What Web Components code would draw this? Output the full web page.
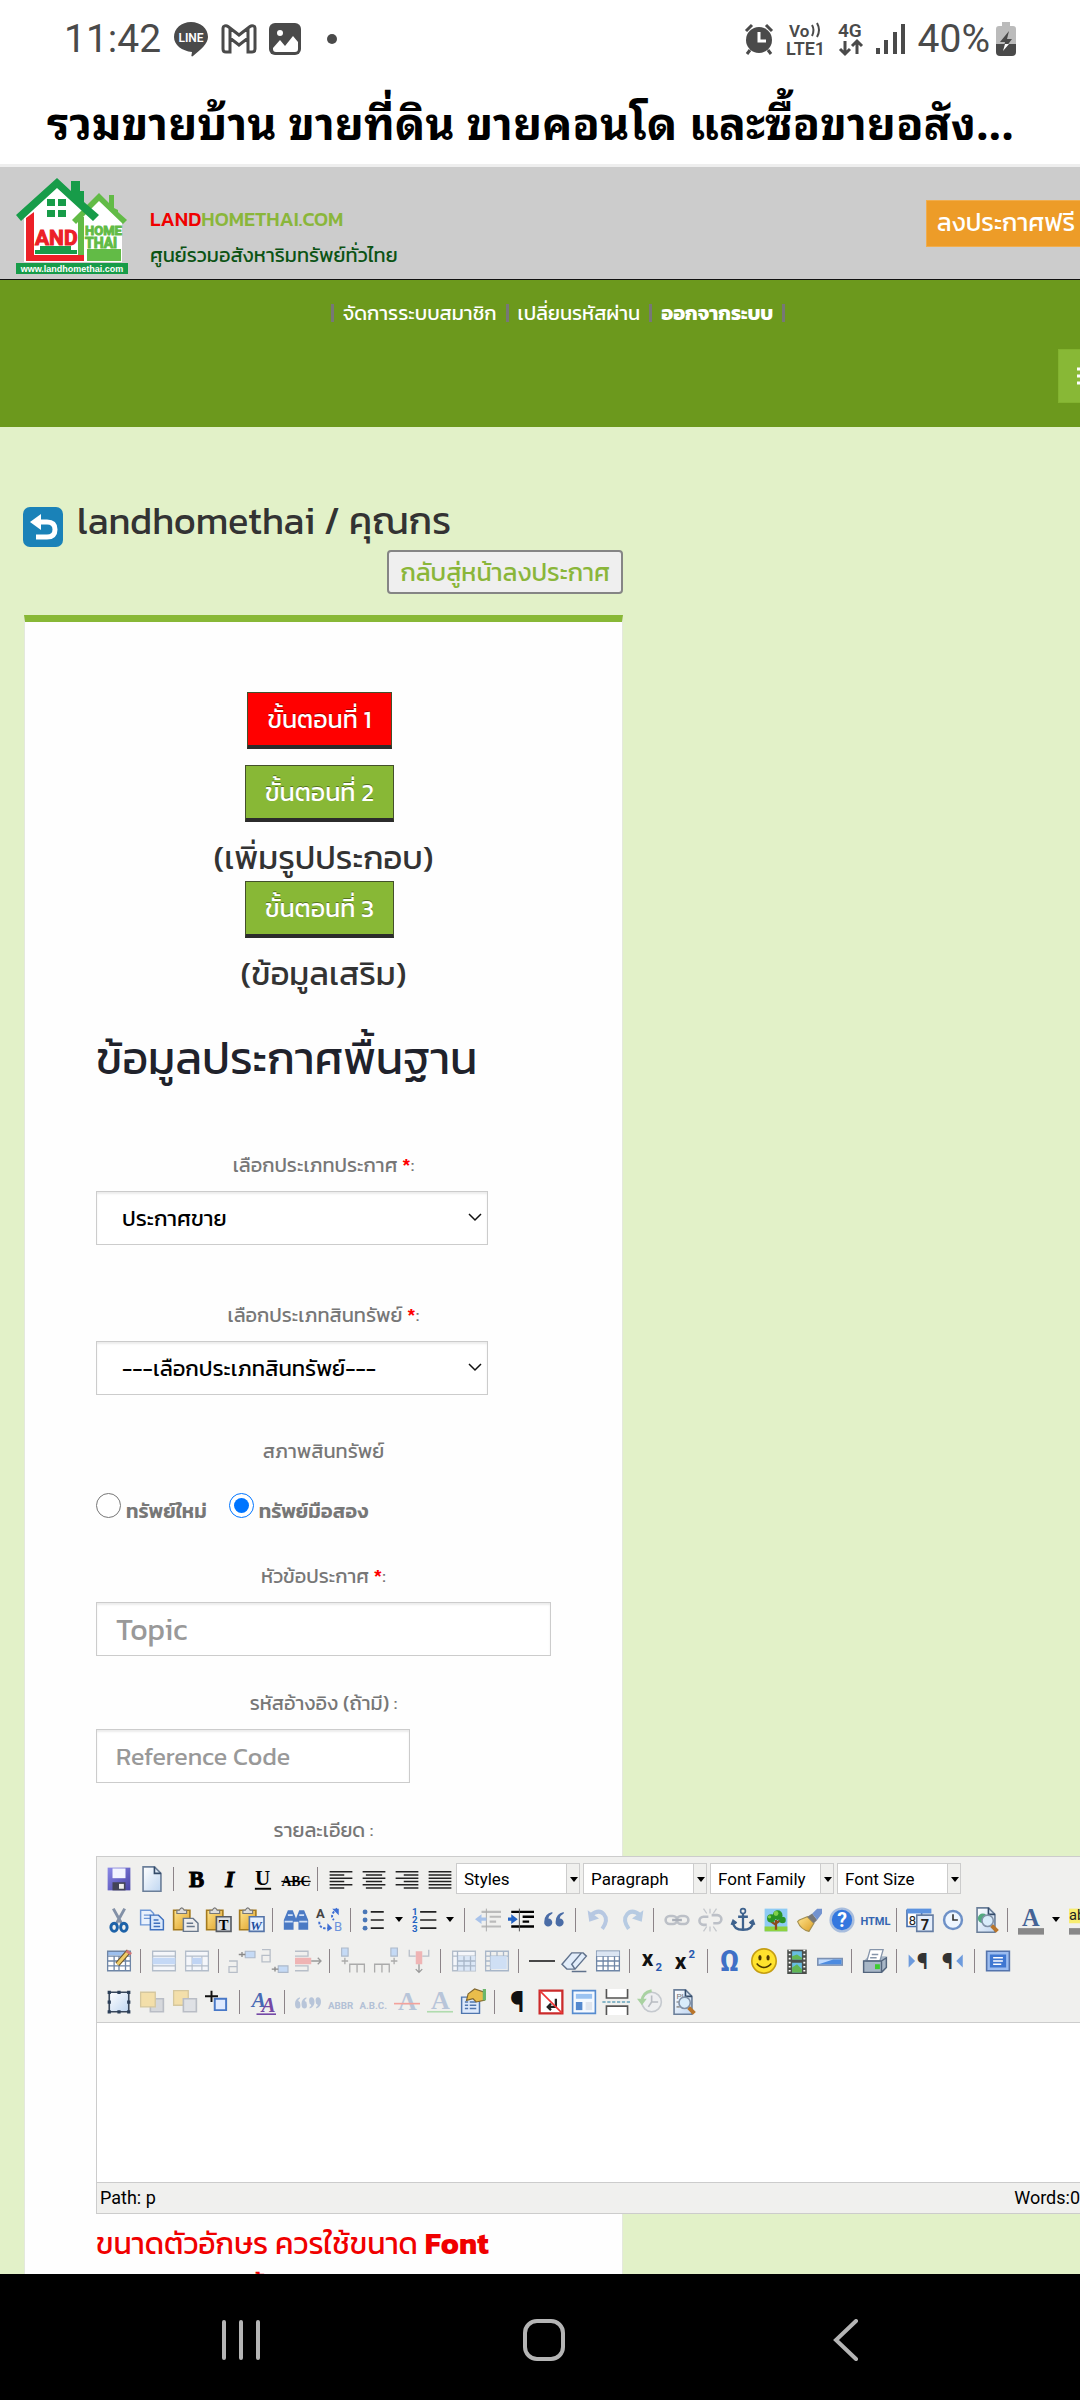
<!DOCTYPE html>
<html lang="th">
<head>
<meta charset="utf-8">
<meta name="viewport" content="width=device-width, initial-scale=1">
<title>รวมขายบ้าน ขายที่ดิน ขายคอนโด และซื้อขายอสังหาริมทรัพย์</title>
<style>
    html, body {
        margin: 0;
        height: 100%;
    }

    body {
        display: flex;
        flex-direction: column;
        overflow: hidden;
        background: #fff;
        color: #333;
        font-family: Kanit, "Noto Sans Thai", "Noto Sans", "Open Sans", sans-serif;
        font-size: 20px;
    }

    main {
        flex: 1;
        min-height: 0;
        overflow: hidden;
        background: #e2f1c8;
    }

    .wide {
        margin-bottom: 56px;
    }

    .type {
        margin-bottom: 42px;
    }
</style>
</head>
<body>
<status-bar></status-bar>
<page-title>รวมขายบ้าน ขายที่ดิน ขายคอนโด และซื้อขายอสัง...</page-title>
<main>
    <site-header></site-header>
    <member-nav></member-nav>
    <member-heading>landhomethai / คุณกร</member-heading>
    <post-card>
        <post-step label="ขั้นตอนที่ 1" active></post-step>
        <post-step label="ขั้นตอนที่ 2">(เพิ่มรูปประกอบ)</post-step>
        <post-step label="ขั้นตอนที่ 3">(ข้อมูลเสริม)</post-step>
        <section-title>ข้อมูลประกาศพื้นฐาน</section-title>
        <select-field class="wide" label="เลือกประเภทประกาศ" required option="ประกาศขาย"></select-field>
        <select-field class="type" label="เลือกประเภทสินทรัพย์" required option="---เลือกประเภทสินทรัพย์---"></select-field>
        <condition-field></condition-field>
        <text-field label="หัวข้อประกาศ" required placeholder="Topic" size="large"></text-field>
        <text-field label="รหัสอ้างอิง (ถ้ามี) " placeholder="Reference Code"></text-field>
        <detail-editor></detail-editor>
        <size-note>ขนาดตัวอักษร ควรใช้ขนาด <b>Font</b><br>ขนาด 16 เท่านั้น</size-note>
    </post-card>
</main>
<system-nav></system-nav>

<script>
class BaseElement extends HTMLElement {

    constructor() {
        super();
        this.shadowDOM = this.attachShadow({mode: "open"});
    }

    connectedCallback() {
        this.render();
    }
}

class StatusBar extends BaseElement {
    render() {
        this.shadowDOM.innerHTML = `
            <style>
                :host {
                    display: flex;
                    align-items: center;
                    justify-content: space-between;
                    height: 78px;
                    padding: 0 64px 0 64px;
                    color: #4a4a4a;
                    font-family: Roboto, sans-serif;
                    font-size: 39px;
                }

                div {
                    display: flex;
                    align-items: center;
                }

                .left {
                    gap: 12px;
                }

                .right {
                    gap: 12px;
                }

                .right span {
                    margin-right: -6px;
                }

                svg {
                    display: block;
                    overflow: visible;
                }

                text {
                    font-weight: 600;
                }
            </style>
            <div class="left">
                <span>11:42</span>
                <svg width="36" height="36" viewBox="0 0 36 36"><path d="M18 1c9.500 0 17 6.500 17 15 0 7-8 13-15 19-1 1-2 0-1.500-1l.5-3C9 30 1 24 1 16 1 7.500 8.500 1 18 1z" fill="#4a4a4a"/><text x="18" y="21" font-size="12" fill="#fff" text-anchor="middle">LINE</text></svg>
                <svg width="36" height="30" viewBox="0 0 36 30"><path d="M2 4c0-2 3-3 5-1.500L18 11 29 2.500C31 1 34 2 34 4v21q0 3-3 3h-4V14l-9 7-9-7v14H5q-3 0-3-3zM9 14V4.500M27 14V4.500" fill="none" stroke="#4a4a4a" stroke-width="3"/></svg>
                <svg width="32" height="32" viewBox="0 0 32 32"><rect width="32" height="32" rx="6" fill="#4a4a4a"/><circle cx="11" cy="10" r="3" fill="#fff"/><path d="M4 25l7-8 5 6 8-10 5 6v7q0 3-3 3H7q-3 0-3-3z" fill="#fff"/></svg>
                <svg width="30" height="10" viewBox="0 0 30 10"><circle cx="19" cy="5" r="5" fill="#4a4a4a"/></svg>
            </div>
            <div class="right">
                <svg width="30" height="32" viewBox="0 0 30 32"><path d="M2 8l6-6M28 8l-6-6M6 27l-3 4M24 27l3 4" stroke="#4a4a4a" stroke-width="3"/><circle cx="15" cy="17" r="13" fill="#4a4a4a"/><path d="M15 9v9h7" fill="none" stroke="#fff" stroke-width="3"/></svg>
                <svg width="40" height="34" viewBox="0 0 40 34" fill="#4a4a4a"><text x="3" y="15" font-size="17">Vo</text><path d="M26 3q3 5 0 11M31 1q4 7 0 14" fill="none" stroke="#4a4a4a" stroke-width="2"/><text x="0" y="33" font-size="18">LTE1</text></svg>
                <svg width="26" height="34" viewBox="0 0 26 34" fill="#4a4a4a"><text x="0" y="15" font-size="19">4G</text><path d="M7 19v12M2 27l5 5 5-5M19 32V20M14 24l5-5 5 5" fill="none" stroke="#4a4a4a" stroke-width="3"/></svg>
                <svg width="30" height="30" viewBox="0 0 30 30"><path d="M2 24v6M10 16v14M19 8v22M27 0v30" stroke="#4a4a4a" stroke-width="4"/></svg>
                <span>40%</span>
                <svg width="20" height="34" viewBox="0 0 20 34"><path d="M6 0h8v4h3q3 0 3 3v17H0V7q0-3 3-3h3z" fill="#bbb"/><path d="M0 22h20v8q0 4-4 4H4q-4 0-4-4z" fill="#4a4a4a"/><path d="M13 9L4 20h5l-2 9 9-12h-5z" fill="#4a4a4a"/><path d="M5 22h4l-2 7 6-7z" fill="#fff"/></svg>
            </div>`;
    }
}

class PageTitle extends BaseElement {
    render() {
        this.shadowDOM.innerHTML = `
            <style>
                :host {
                    display: block;
                    box-sizing: border-box;
                    height: 89px;
                    padding: 12px 0 0 47px;
                    border-bottom: 3px solid #eee;
                    color: #000;
                    font-family: "Noto Sans Thai Looped", "Noto Looped Thai", "Loma", "Noto Sans Thai", "Noto Sans", sans-serif;
                    font-size: 45px;
                    font-weight: 700;
                    line-height: 60px;
                }

                h1 {
                    margin: 0;
                    font: inherit;
                    white-space: nowrap;
                }
            </style>
            <h1><slot></slot></h1>`;
    }
}

class SiteHeader extends BaseElement {
    render() {
        this.shadowDOM.innerHTML = `
            <style>
                :host {
                    display: flex;
                    box-sizing: border-box;
                    height: 113px;
                    padding-left: 16px;
                    border-bottom: 1px solid #111;
                    background: #ccc;
                }

                .logo {
                    margin-top: 11px;
                }

                .names {
                    flex: 1;
                    margin: 34px 0 0 22px;
                    line-height: 36px;
                    white-space: nowrap;
                }

                p {
                    margin: 0;
                    color: #0b5314;
                }

                .brand {
                    color: #8ab63a;
                    font-weight: 500;
                }

                .brand span {
                    color: #f00000;
                }

                .post {
                    height: 47px;
                    margin: 33px -8px 0 0;
                    padding: 0 12px 0 10px;
                    border: 1px solid #f0ad4e;
                    background: #ed9c28;
                    color: #fff;
                    font-size: 25px;
                    line-height: 42px;
                    text-decoration: none;
                    box-sizing: border-box;
                }
            </style>
            <svg class="logo" width="112" height="96" viewBox="0 0 112 96" font-family="Liberation Sans Narrow, Roboto, sans-serif" font-weight="700">
                <path d="M41 5L8 38V84H106V40L83 18 72 32z" fill="#fff"/>
                <path d="M62 39h6v38h37v6H62z" fill="#62bb46"/>
                <path d="M71 71h34v11H71z" fill="#62bb46"/>
                <path d="M83 15L93 25V17h5v13l4 2v2l9 8-4 4-24-23-23 23-4-4z" fill="#62bb46"/>
                <path d="M66 77h5v6h-5z" fill="#fff"/>
                <path d="M10 40l8-6v43h50v6H10z" fill="#ec2027"/>
                <path d="M41 0L55 13V3h9v10h4v11l15 13-6 6L41 10 5 43 0 37z" fill="#179c49"/>
                <path d="M31 21h8v7h-8zM42 21h8v7h-8zM31 32h8v7h-8zM42 32h8v7h-8z" fill="#179c49"/>
                <text x="19" y="67" font-size="21" fill="#ec2027" stroke="#ec2027">AND</text>
                <path d="M24 68h31v4h6v4H19v-4h5z" fill="#179c49"/>
                <text x="69" y="57" font-size="13" fill="#62bb46" stroke="#62bb46">HOME</text>
                <text x="69" y="70" font-size="14" fill="#62bb46" stroke="#62bb46">THAI</text>
                <path d="M0 85h112v11H0z" fill="#179c49"/>
                <text x="56" y="94" font-size="9" fill="#fff" text-anchor="middle" font-family="Liberation Sans">www.landhomethai.com</text>
            </svg>
            <div class="names">
                <p class="brand"><span>LAND</span>HOMETHAI.COM</p>
                <p>ศูนย์รวมอสังหาริมทรัพย์ทั่วไทย</p>
            </div>
            <a class="post" href="#post">ลงประกาศฟรี</a>`;
    }
}

class MemberNav extends BaseElement {
    render() {
        this.shadowDOM.innerHTML = `
            <style>
                :host {
                    display: block;
                    height: 147px;
                    overflow: hidden;
                    background: #6c991d;
                }

                nav {
                    display: flex;
                    justify-content: center;
                    align-items: center;
                    gap: 9px;
                    height: 66px;
                    padding-left: 36px;
                }

                a {
                    color: #fff;
                    text-decoration: none;
                }

                i {
                    width: 3px;
                    height: 18px;
                    background: #777;
                }

                button {
                    display: flex;
                    align-items: center;
                    width: 66px;
                    height: 54px;
                    margin: 3px -44px 0 auto;
                    padding: 0 18px;
                    border: 1px solid #82b22f;
                    background: #88b836;
                }
            </style>
            <nav>
                <i></i><a href="#member">จัดการระบบสมาชิก</a>
                <i></i><a href="#password">เปลี่ยนรหัสผ่าน</a>
                <i></i><a href="#logout"><b>ออกจากระบบ</b></a><i></i>
            </nav>
            <button aria-label="Menu"><svg width="26" height="18" viewBox="0 0 26 18"><path d="M0 2h26M0 9h26M0 16h26" stroke="#fff" stroke-width="3"/></svg></button>`;
    }
}

class MemberHeading extends BaseElement {
    render() {
        this.shadowDOM.innerHTML = `
            <style>
                :host {
                    display: grid;
                    grid-template-columns: 40px 1fr;
                    column-gap: 14px;
                    max-width: 600px;
                    padding: 68px 0 21px 23px;
                }

                h2 {
                    margin: 0;
                    color: #333;
                    font-size: 38px;
                    font-weight: 400;
                    line-height: 52px;
                }

                svg {
                    margin-top: 12px;
                }

                button {
                    grid-column: 1 / 3;
                    justify-self: end;
                    height: 44px;
                    margin-top: 3px;
                    padding: 0 11px;
                    border: 2px solid #858585;
                    border-radius: 4px;
                    background: #efefef;
                    color: #8ab63a;
                    font: inherit;
                    font-size: 25px;
                    line-height: 36px;
                }
            </style>
            <svg width="40" height="40" viewBox="0 0 40 40"><rect width="40" height="40" rx="7" fill="#1a82b8"/><path d="M16 15h8q8 0 8 7.500T24 30H13" fill="none" stroke="#fff" stroke-width="5"/><path d="M18 7v16L7 15z" fill="#fff"/></svg>
            <h2><slot></slot></h2>
            <button>กลับสู่หน้าลงประกาศ</button>`;
    }
}

class PostCard extends BaseElement {
    render() {
        this.shadowDOM.innerHTML = `
            <style>
                :host {
                    display: block;
                    box-sizing: border-box;
                    max-width: 599px;
                    margin-left: 24px;
                    padding: 70px 71px;
                    border: 1px solid #e4e9dc;
                    border-top: 7px solid #88b836;
                    background: #fefefe;
                }
            </style>
            <slot></slot>`;
    }
}

class PostStep extends BaseElement {
    render() {
        const active = this.hasAttribute("active");
        this.shadowDOM.innerHTML = `
            <style>
                :host {
                    display: flex;
                    flex-direction: column;
                    align-items: center;
                    font-size: 33px;
                    line-height: 46px;
                }

                button {
                    height: 57px;
                    margin: 0 8px 13px 0;
                    padding: 0 19px;
                    border: 1px solid #44502b;
                    border-bottom: 4px solid #2b2b2b;
                    background: ${active ? "#f00" : "#88b836"};
                    color: #fff;
                    font: inherit;
                    font-size: 25px;
                    line-height: 50px;
                    text-shadow: 0 -1px 0 rgba(0, 0, 0, 0.4);
                }

                :host([active]) {
                    margin-bottom: 3px;
                }
            </style>
            <button>${this.getAttribute("label")}</button>
            <slot></slot>`;
    }
}

class SectionTitle extends BaseElement {
    render() {
        this.shadowDOM.innerHTML = `
            <style>
                :host {
                    display: block;
                    margin: 20px 0 52px;
                    color: #20222b;
                }

                h3 {
                    margin: 0;
                    font-size: 45px;
                    font-weight: 400;
                    line-height: 82px;
                    white-space: nowrap;
                }
            </style>
            <h3><slot></slot></h3>`;
    }
}

const fieldStyle = `
    :host {
        display: block;
        color: #777;
        font-size: 20px;
    }

    .label {
        display: block;
        height: 28px;
        margin-bottom: 12px;
        line-height: 29px;
        text-align: center;
    }

    .label span {
        color: #f00;
        font-weight: 500;
    }

    input[type="text"], select {
        display: block;
        box-sizing: border-box;
        height: 54px;
        border: 1px solid #ccc;
        border-radius: 0;
        background: #fff;
        box-shadow: inset 0 2px 2px rgba(0, 0, 0, 0.08);
        font: inherit;
    }
`;

function fieldLabel(element) {
    const star = element.hasAttribute("required") ? " <span>*</span>" : "";
    return `<label class="label" for="control">${element.getAttribute("label")}${star}:</label>`;
}

class SelectField extends BaseElement {
    render() {
        this.shadowDOM.innerHTML = `
            <style>
                ${fieldStyle}

                .box {
                    position: relative;
                    width: 392px;
                }

                select {
                    width: 100%;
                    padding: 0 25px;
                    appearance: none;
                    color: #000;
                    font-size: 22px;
                }

                svg {
                    position: absolute;
                    right: 6px;
                    top: 22px;
                    pointer-events: none;
                }
            </style>
            ${fieldLabel(this)}
            <div class="box">
                <select id="control"><option>${this.getAttribute("option")}</option></select>
                <svg width="14" height="9" viewBox="0 0 14 9"><path d="M1 1l6 6 6-6" fill="none" stroke="#111" stroke-width="1.500"/></svg>
            </div>`;
    }
}

class TextField extends BaseElement {
    render() {
        const large = this.getAttribute("size") === "large";
        this.shadowDOM.innerHTML = `
            <style>
                ${fieldStyle}

                :host {
                    margin-bottom: 33px;
                }

                input {
                    width: ${large ? "100%" : "314px"};
                    padding: 0 19px;
                }

                input[type="text"] {
                    font-size: ${large ? "30px" : "25px"};
                }

                input::placeholder {
                    color: #999;
                }
            </style>
            ${fieldLabel(this)}
            <input type="text" id="control" placeholder="${this.getAttribute("placeholder")}">`;
    }
}

class ConditionField extends BaseElement {
    render() {
        this.shadowDOM.innerHTML = `
            <style>
                ${fieldStyle}

                :host {
                    margin-bottom: 38px;
                }

                .label {
                    margin-bottom: 28px;
                }

                .choices {
                    display: flex;
                    height: 31px;
                    font-weight: 600;
                    line-height: 36px;
                }

                .choices label {
                    margin: 0 22px 0 5px;
                    white-space: nowrap;
                }

                input {
                    width: 25px;
                    height: 25px;
                    margin: 0;
                    accent-color: #0075ff;
                }
            </style>
            <span class="label">สภาพสินทรัพย์</span>
            <div class="choices">
                <input type="radio" name="condition" id="new"><label for="new">ทรัพย์ใหม่</label>
                <input type="radio" name="condition" id="used" checked><label for="used">ทรัพย์มือสอง</label>
            </div>`;
    }
}

// 16x16 drawings of the editor's buttons
const line = (d, color = "#222", width = 1) => `<path d="${d}" fill="none" stroke="${color}" stroke-width="${width}"/>`;
const fill = (d, color) => `<path d="${d}" fill="${color}"/>`;
const letter = (text, x, y, size, color, extra = "") => `<text x="${x}" y="${y}" font-size="${size}" fill="${color}" ${extra}>${text}</text>`;
const sheet = `<path d="M2.500 .5h7l4 4v11h-11z" fill="url(#paper)" stroke="#6b7f99"/>` + line("M9.500 .5v4h4", "#334a68");
const lens = `<circle cx="9" cy="8.500" r="3.500" fill="#d9ecfa" stroke="#8192a8"/>` + line("M11.500 11.500l3.500 3.500", "#b9752a", 2.5);
const board = `<path d="M1 2h10v12H1z" fill="url(#gold)" stroke="#a47a1e"/><path d="M3 3V2h1.500q1.500-3 3 0H9v2H3z" fill="#ddd" stroke="#777" stroke-width=".7"/>`;
const grid = fill("M1 2h14v12H1z", "#fff") + fill("M1 2h14v2.500H1z", "#9dc0ee") + line("M1 2h14v12H1zM1 5h14M1 8h14M1 11h14M5 5v9M8 5v9M12 5v9", "#6f86a6", .8);
const paleGrid = fill("M1 2h14v12H1z", "#f4f6fa") + line("M1 2h14v12H1zM1 5h14M1 11h14", "#b3bdca", .8);
const serif = 'class="serif" font-weight="700"';

const icons = {
    save: fill("M1 1h14v14H1z", "url(#violet)") + fill("M4 1.500h8v6H4z", "#f2f4ff") + fill("M4 10h8v5H4z", "#434457") + fill("M8 11h3v3H8z", "#eee"),
    newdoc: sheet,
    bold: letter("B", 3, 13, 14, "#000", serif + ' stroke="#000" stroke-width=".6"'),
    italic: letter("I", 5, 13, 14, "#000", serif + ' stroke="#000" stroke-width=".6" font-style="italic"'),
    underline: letter("U", 3, 11.5, 13, "#000", serif) + line("M3 14h10", "#000", 1.2),
    strike: letter("ABC", -1, 12, 8.5, "#000", serif) + line("M-1 9.500h18", "#000", .8),
    left: line("M1 3.500h14M1 5.500h9M1 7.500h14M1 9.500h9M1 11.500h14M1 13.500h9"),
    center: line("M1 3.500h14M3 5.500h10M1 7.500h14M3 9.500h10M1 11.500h14M3 13.500h10"),
    right: line("M1 3.500h14M6 5.500h9M1 7.500h14M6 9.500h9M1 11.500h14M6 13.500h9"),
    full: line("M1 3.500h14M1 5.500h14M1 7.500h14M1 9.500h14M1 11.500h14M1 13.500h14"),
    cut: line("M4.500 1l5 9M11.500 1l-5 9", "#8391a7", 1.8) + `<ellipse cx="5" cy="12.500" rx="2" ry="2.500" fill="none" stroke="#1d62a8" stroke-width="1.800"/><ellipse cx="11" cy="12.500" rx="2" ry="2.500" fill="none" stroke="#1d62a8" stroke-width="1.800"/>`,
    copy: fill("M1 2h6l2 2v7H1z", "#e9f1fc") + line("M1 2h6l2 2v7H1zM3 5h4M3 7h4", "#6f98d6", .9) + fill("M7 5h5l3 3v6H7z", "#dbe9fb") + line("M7 5h5l3 3v6H7zM9 8h3M9 10h4M9 12h4", "#3f70bd", .9),
    paste: board + fill("M7 7h6l3 3v5H7z", "#eee") + line("M7 7h6l3 3v5H7zM9 10h4M9 12h5", "#68778b", .9),
    pastetext: board + fill("M7 6h9v9H7z", "#d9dde2") + line("M7 6h9v9H7z", "#565b63") + letter("T", 8.5, 14, 9, "#000", serif),
    pasteword: board + fill("M7 6h9v9H7z", "#e5f0ff") + line("M7 6h9v9H7z", "#5574a8") + letter("W", 7.5, 14, 8, "#1d4e9e", serif + ' font-style="italic"'),
    find: fill("M3 2h3l2 5h0l2-5h3l2.500 6v6H9.500V9h-3v5H.5V8z", "#4b7ac4") + line("M3 5h3M10 5h3M1 9h5M10 9h5", "#cfe0f8"),
    replace: letter("A", 0, 7, 8, "#444", 'font-weight="700"') + letter("B", 11, 15, 8, "#6d93dc") + `<path d="M13 1q-5 4-2 7M2 9q0 5 6 4" fill="none" stroke="#3f6fd4" stroke-width="1.200" stroke-dasharray="1.500 1"/>` + fill("M10 1h4v4zM7 10l3 3-3 2z", "#3f6fd4"),
    bullist: `<g fill="#4a77b7"><circle cx="2.500" cy="3" r="1.500"/><circle cx="2.500" cy="8" r="1.500"/><circle cx="2.500" cy="13" r="1.500"/></g>` + line("M6 3h8M6 8h8M6 13h8"),
    numlist: letter("1", 0, 5, 6, "#2463c2", 'font-weight="700"') + letter("2", 0, 10, 6, "#2463c2", 'font-weight="700"') + letter("3", 0, 15.5, 6, "#2463c2", 'font-weight="700"') + line("M5 3h10M5 8h10M5 13h10"),
    outdent: line("M4 3h12M9 6h7M9 9h4M4 12h12", "#bbb", 1.3) + line("M7 1v14", "#aaa", .6) + fill("M0 7.500l4-3v2h3v2H4v2z", "#a9c3ea"),
    indent: line("M2 3h14M9 6h7M9 9h4M2 12h14", "#000", 1.5) + line("M7 1v14", "#555", .6) + fill("M6 7.500l-4-3v2H0v2h2v2z", "#2463c2"),
    quote: fill("M7 3Q2 4 2 9a2.500 2.500 0 1 0 2.500-2Q5 5 7 4zM14 3Q9 4 9 9a2.500 2.500 0 1 0 2.500-2Q12 5 14 4z", "#4a6ca6"),
    undo: line("M3 5q5-4 8-.5t-1 9", "#b7c8e2", 2.4) + fill("M1 2l1 7 6-2z", "#b7c8e2"),
    redo: line("M13 5Q8 1 5 4.500t1 9", "#b7cbe2", 2.4) + fill("M15 2l-1 7-6-2z", "#b7cbe2"),
    link: `<g fill="none" stroke="#bcc0c7" stroke-width="1.600"><rect x="1" y="5.500" width="7" height="5" rx="2.500"/><rect x="8" y="5.500" width="7" height="5" rx="2.500"/></g>` + line("M5 8h6", "#aaafb8", 1.5),
    unlink: `<g fill="none" stroke="#bcc0c7" stroke-width="1.600"><path d="M7 6H4a2.500 2.500 0 0 0 0 5h2M9 5h3.500a2.500 2.500 0 0 1 0 5H10"/></g>` + line("M8 1v3M4 1l2 3M12 1l-2 3M8 12v3M4 15l2-3M12 15l-2-3", "#c4c7cc", .8),
    anchor: line("M8 4v10M5 6h6M2 9q0 5 6 5t6-5M1 11l1-2.500L4 10M15 11l-1-2.500L12 10", "#3e628d", 1.4) + `<circle cx="8" cy="2.500" r="1.500" fill="none" stroke="#3e628d"/>`,
    image: fill("M1 1h14v14H1z", "#8ecbf4") + fill("M1 12h14v3H1z", "#8fd13f") + line("M8 8v6M8 11l-3-2M8 10l3-2", "#8c4b1b", 1.4) + `<g fill="#299326"><circle cx="5" cy="7" r="2.500"/><circle cx="9" cy="5" r="3"/><circle cx="12" cy="8" r="2"/></g><g fill="#7fcf4a"><circle cx="4" cy="6" r="1"/><circle cx="8" cy="4" r="1.500"/></g>`,
    cleanup: fill("M2 8l5-2 4 4-3 5q-5-1-7-6z", "url(#gold)") + line("M2 8l5-2 4 4-3 5q-5-1-7-6z", "#a49050", .7) + fill("M7 6l3-2 3 4-2 2z", "#777") + fill("M10 4l3-3h3v3l-3 4z", "#7292cf"),
    help: `<circle cx="8" cy="8" r="7" fill="#3477df" stroke="#a8bddd" stroke-width="1.500"/>` + letter("?", 5, 12.5, 12, "#fff", 'font-weight="700"'),
    html: letter("HTML", -1, 11, 6.8, "#3465b0", 'font-weight="700"'),
    date: fill("M0 2h9v10H0z", "#fff") + line("M0 2h9v10H0z", "#446eae") + fill("M0 1h15v3H0z", "#5d93df") + letter("8", 1, 11, 8, "#222") + fill("M6 5h10v10H6z", "#e5eefb") + line("M6 5h10v10H6z", "#657da3") + letter("7", 8.5, 14, 9, "#222", 'font-weight="700"'),
    time: `<circle cx="8" cy="8" r="5.500" fill="#eef6ff" stroke="#6e91c7" stroke-width="1.500"/>` + line("M8 4.500V8h3", "#333"),
    preview: sheet + `<circle cx="6" cy="7" r="3" fill="#53a980"/>` + lens,
    forecolor: letter("A", 2.5, 11.5, 15, "#446395", serif) + fill("M0 13h16v4H0z", "#888"),
    backcolor: fill("M0 1h12v9H0z", "#f7ed71") + letter("ab", 0, 8, 9, "#222") + fill("M0 13h16v4H0z", "#888"),
    table: grid + line("M7 10l7-8", "#6c5328", 3.2) + line("M7 10l7-8", "#efcc67", 2) + fill("M13 1l3 2-1 1.500-3-2z", "#ce7676"),
    rowprops: paleGrid + fill("M1 6h14v4H1z", "#c4d8f5"),
    cellprops: paleGrid + line("M5 5v9M11 5v9", "#b3bdca", .7) + fill("M5 6h6v4H5z", "#c0d4f3"),
    rowbefore: line("M0 8h5v3.500H0v3.500h5v-3.500", "#b7bec8", .8) + fill("M10 2h6v4h-6z", "#c5daf5") + line("M10 2h6v4h-6z", "#adb9ca", .7) + line("M6 4h4M8 2.500v3", "#888", .8),
    rowafter: line("M0 1h5v3.500H0v4h5v-7", "#b7bec8", .8) + fill("M10 11h6v4h-6z", "#c5daf5") + line("M10 11h6v4h-6z", "#adb9ca", .7) + line("M6 13h4M8 11.500v3", "#888", .8),
    rowdelete: line("M0 2h8v3H0M0 14h8v-3H0", "#b7bec8", .8) + fill("M0 6h10v4H0z", "#efb4b4") + line("M10 8h6M14 6l2 2-2 2", "#999", .8),
    colbefore: fill("M1 0h4v5H1z", "#c5daf5") + line("M1 0h4v5H1z", "#adb9ca", .7) + line("M3 6v4M1 8h4M6 15v-5h9v5M10.500 10v5", "#aaa", .8),
    colafter: fill("M11 0h4v5h-4z", "#c5daf5") + line("M11 0h4v5h-4z", "#adb9ca", .7) + line("M13 6v4M11 8h4M1 15v-5h9v5M5.500 10v5", "#aaa", .8),
    coldelete: line("M2 1v4h4M14 1v4h-4", "#b7bec8", .8) + fill("M6 2h4v8H6z", "#efb4b4") + line("M8 10v5M6 13l2 2 2-2", "#999", .8),
    split: paleGrid + fill("M4 5h11v9H4z", "#dbe7f6") + line("M4 2v12M8 5v9M12 5v9M4 8h11M4 11h11", "#a8b6c8", .8),
    merge: line("M1 2h14v12H1zM1 5h14M4 2v12M1 8h3M1 11h3M8 2v3M12 2v3", "#a8b6c8", .8) + fill("M4 5h10v8H4z", "#cfdff4"),
    hr: line("M0 8h16"),
    erase: fill("M0 10l6-7h7l2 2-7 8H3z", "#e2edfa") + line("M0 10l6-7h7l2 2-7 8H3zM8 13l-2-3 6-7M6 14.500h9", "#60728c", .9),
    visual: grid + fill("M1 2h14v3H1z", "#dbe5f2"),
    sub: letter("x", 1, 11, 14, "#111", 'font-weight="700"') + letter("2", 9.5, 14, 7, "#2858ae", 'font-weight="700"'),
    sup: letter("x", 1, 13, 14, "#111", 'font-weight="700"') + letter("2", 9.5, 6, 7, "#2858ae", 'font-weight="700"'),
    charmap: letter("Ω", 1, 14, 18, "#3f70c6", 'font-weight="700"'),
    smile: `<circle cx="8" cy="8" r="7.500" fill="#ffe32d" stroke="#c59e13"/><ellipse cx="5.500" cy="6" rx="1" ry="1.700" fill="#4d3900"/><ellipse cx="10.500" cy="6" rx="1" ry="1.700" fill="#4d3900"/>` + line("M3.500 9.500q4.500 5 9 0", "#4d3900"),
    media: fill("M2 1h12v15H2z", "#4b4f4b") + fill("M5 2h6v5H5zM5 9h6v6H5z", "#68bde0") + fill("M5 5l3-1 3 2v1H5zM5 12l3-2 3 3v2H5z", "#62b653") + `<path d="M3.500 1v15M12.500 1v15" stroke="#fff" stroke-width="1.200" stroke-dasharray="1 1.500"/>`,
    advhr: fill("M0 6h16v5H0z", "#7c91b2") + fill("M1 7h14v3H1z", "#bedaff") + fill("M1 10l9-3h5v3z", "#4c8be0"),
    print: fill("M1 8l3-3h11v7l-3 3H1z", "#a8b7c7") + fill("M5 1h8l-2 7H3z", "#fff") + line("M5 1h8l-2 7H3zM6 4h4M5 6h4", "#8695aa", .8) + line("M1 8h11v7H1zM12 8l3-2v6l-3 3", "#53657d", .9) + fill("M8 10h3v3H8z", "#3dcc2f"),
    ltr: fill("M1 4l4 4-4 4z", "#6d9bdd") + letter("¶", 6, 13, 14, "#333", 'font-weight="700"'),
    rtl: fill("M14 4l-4 4 4 4z", "#6d9bdd") + letter("¶", 1, 13, 14, "#333", 'font-weight="700"'),
    screen: fill("M1 2h14v12H1z", "#9cbdf0") + line("M1 2h14v12H1z", "#5574ac") + fill("M3 4h10v8H3z", "#3f77d1") + line("M5 6h6M5 8h6M5 10h5", "#fff", .9),
    layer: fill("M2 2h12v12H2z", "url(#paper)") + line("M2 2h12v12H2z", "#3a485c") + fill("M1 1h2v2H1zM7 1h2v2H7zM13 1h2v2h-2zM1 7h2v2H1zM13 7h2v2h-2zM1 13h2v2H1zM7 13h2v2H7zM13 13h2v2h-2z", "#2c3f58"),
    forward: fill("M7 6h8v8H7z", "#d6d8dc") + line("M7 6h8v8H7z", "#b9bdc5") + fill("M1 2h9v9H1z", "#f3dfaa") + line("M1 2h9v9H1z", "#d5c79e", .8),
    backward: fill("M1 1h9v9H1z", "#f3dfaa") + line("M1 1h9v9H1z", "#d5c79e", .8) + fill("M7 6h8v8H7z", "#dfe1e5") + line("M7 6h8v8H7z", "#b9bdc5"),
    absolute: line("M4 1v7M0 4.500h8", "#111", 1.2) + fill("M6 6h7v7H6z", "#dfeaff") + line("M6 6h7v7H6z", "#4878c7", 1.2),
    styles: letter("A", 1, 11, 13, "#486ab4", serif + ' font-style="italic"') + letter("A", 7, 14, 13, "#7549a5", serif + ' font-style="italic"') + line("M4 15.500h12", "#7549a5"),
    cite: fill("M3 5Q0 6 0 9t2 3 1-4Q1 7 3 6zM7 5Q4 6 4 9t2 3 1-4Q5 7 7 6zM9 12q3-1 3-4t-2-3-1 4q2 1 0 2zM13 12q3-1 3-4t-2-3-1 4q2 1 0 2z", "#b8c5d9"),
    abbr: letter("ABBR", 0, 12, 6, "#b3c1d6", 'font-weight="700"'),
    acronym: letter("A.B.C.", -1, 12, 6, "#b3c1d6", 'font-weight="700"'),
    del: letter("A", 2.5, 13, 16, "#b8c5d9", serif) + line("M0 9h16", "#f3a29b"),
    ins: letter("A", 2.5, 12.5, 16, "#b8c5d9", serif) + line("M0 14h16", "#b0dcae"),
    attribs: fill("M1 5h11v10H1z", "#dce9fb") + line("M1 5h11v10H1zM3 8h2M6 8h4M3 10h2M6 10h4M3 12h2M6 12h4", "#4f76ae", .9) + fill("M5 3l4-3 6 2v5l-5 1-2-2-4 1z", "#e9bd4b") + line("M5 3l4-3 6 2v5l-5 1-2-2-4 1z", "#80662e", .7) + fill("M14 0h2v7h-2z", "#6bb66b"),
    visualchars: letter("¶", 3, 14, 18, "#111", 'font-weight="700"'),
    nonbreaking: fill("M1 1h14v14H1z", "#fff") + line("M1 1h14v14H1z", "#cb2b2b", 1.4) + line("M11 6v5H6M8 9l-2 2 2 2", "#222", 1.4) + line("M1 1l14 14", "#e33"),
    template: fill("M1 1h14v14H1z", "#f4f9ff") + line("M1 1h14v14H1z", "#568bcf") + fill("M3 3h10v3H3z", "#9bc3f1") + fill("M3 8h4v5H3z", "#5388ce") + fill("M9 8h4v5H9z", "#dfe5ee"),
    pagebreak: fill("M2 0h12v5H2zM2 10h12v6H2z", "#fff") + line("M1.500 0v5.500h13V0M1.500 16v-5.500h13V16", "#555") + `<path d="M-1 8h18" stroke="#66a3ba" stroke-dasharray="2 1"/>`,
    restore: `<circle cx="9" cy="8" r="6" fill="#eeeff1" stroke="#c5c9ce"/>` + line("M9 4v4h4M9 8l-2 3", "#b8bcc2") + line("M3 8q0-6 6-7", "#a9d2a1", 1.6) + fill("M0 6h6l-3 4z", "#a9d2a1"),
    previewpage: sheet + letter("P!", 4, 6, 5, "#777") + line("M4 8h2M4 11h2", "#999") + lens
};

const rows = [
    "save newdoc | bold italic underline strike | left center right full",
    "cut copy paste pastetext pasteword | find replace | bullist+ numlist+ | outdent indent quote | undo redo | link unlink anchor image cleanup help html | date time preview | forecolor+ backcolor+",
    "table | rowprops cellprops | rowbefore rowafter rowdelete | colbefore colafter coldelete | split merge | hr erase visual | sub sup | charmap smile media advhr | print | ltr rtl | screen",
    "layer forward backward absolute | styles | cite abbr acronym del ins attribs | visualchars nonbreaking template pagebreak restore previewpage"
];

class DetailEditor extends BaseElement {
    tool(name) {
        if (name === "|") {
            return "<i></i>";
        }
        const id = name.replace("+", "");
        const arrow = name.endsWith("+") ? `<button class="arrow" aria-label="${id} options"></button>` : "";
        return `<button aria-label="${id}"><svg width="26" height="26" viewBox="0 0 16 16">${icons[id]}</svg></button>${arrow}`;
    }

    render() {
        const lists = ["Styles", "Paragraph", "Font Family", "Font Size"]
            .map(name => `<span class="list"><select aria-label="${name}"><option>${name}</option></select></span>`)
            .join("");

        this.shadowDOM.innerHTML = `
            <style>
                ${fieldStyle}

                .editor {
                    width: calc(100vw - 96px);
                    box-sizing: border-box;
                    overflow: hidden;
                    border: 1px solid #ccc;
                    border-right: 0;
                    background: #f0f0ee;
                    color: #000;
                    font-family: Roboto, sans-serif;
                    font-size: 18px;
                }

                .tools {
                    padding: 1px 0 0 5px;
                    border-bottom: 1px solid #ccc;
                }

                .row {
                    display: flex;
                    align-items: center;
                    width: max-content;
                    height: 41px;
                }

                button {
                    display: flex;
                    align-items: center;
                    justify-content: center;
                    width: 33px;
                    height: 33px;
                    padding: 0;
                    border: 0;
                    background: none;
                }

                button.arrow {
                    width: 18px;
                }

                .arrow::after, .list::after {
                    content: "";
                    border: 4px solid transparent;
                    border-top: 5px solid #000;
                    border-bottom: 0;
                }

                .row svg {
                    overflow: visible;
                }

                i {
                    width: 1px;
                    height: 24px;
                    margin: 0 6px 0 5px;
                    background: #8c8488;
                }

                .list {
                    position: relative;
                    margin-right: 3px;
                }

                .list::after {
                    position: absolute;
                    right: 2px;
                    top: 14px;
                }

                .list select {
                    width: 124px;
                    height: 31px;
                    padding: 0 7px;
                    appearance: none;
                    background: linear-gradient(to right, #fff 109px, #ccc 109px, #ccc 110px, #f0f0ee 110px);
                    box-shadow: none;
                    color: #000;
                    font-size: 17px;
                }

                .text {
                    height: 159px;
                    background: #fff;
                    outline: 0;
                }

                .path {
                    display: flex;
                    justify-content: space-between;
                    padding-left: 3px;
                    border-top: 1px solid #ccc;
                    line-height: 30px;
                }

                text {
                    font-family: Roboto, sans-serif;
                }

                text.serif {
                    font-family: "Liberation Serif", serif;
                }
            </style>
            <svg width="0" height="0" style="position: absolute">
                <linearGradient id="paper" x2="1" y2="1"><stop stop-color="#fff"/><stop offset="1" stop-color="#bfd6f1"/></linearGradient>
                <linearGradient id="gold" x2="1" y2="1"><stop stop-color="#ffe58e"/><stop offset="1" stop-color="#dd9e25"/></linearGradient>
                <linearGradient id="violet" x2="1" y2="1"><stop stop-color="#8c8ae8"/><stop offset="1" stop-color="#4843a5"/></linearGradient>
            </svg>
            <span class="label">รายละเอียด :</span>
            <div class="editor">
                <div class="tools">
                    ${rows.map((row, index) => `<div class="row">${row.split(" ").map(name => this.tool(name)).join("")}${index ? "" : lists}</div>`).join("")}
                </div>
                <div class="text" contenteditable="true" role="textbox" aria-label="รายละเอียด"></div>
                <div class="path"><span>Path: p</span><span>Words:0</span></div>
            </div>`;
    }
}

class SizeNote extends BaseElement {
    render() {
        this.shadowDOM.innerHTML = `
            <style>
                :host {
                    display: block;
                    padding-top: 6px;
                    color: #f00000;
                    font-size: 30px;
                    line-height: 48px;
                    white-space: nowrap;
                }
            </style>
            <slot></slot>`;
    }
}

class SystemNav extends BaseElement {
    render() {
        this.shadowDOM.innerHTML = `
            <style>
                :host {
                    display: flex;
                    justify-content: space-between;
                    align-items: center;
                    box-sizing: border-box;
                    height: 126px;
                    padding: 6px 194px 0 201px;
                    background: #000;
                }

                button {
                    width: 80px;
                    height: 80px;
                    padding: 0;
                    border: 0;
                    background: none;
                }

                svg {
                    display: block;
                    margin: auto;
                    fill: none;
                    stroke: #b5b5b5;
                    stroke-width: 4;
                    stroke-linecap: round;
                }
            </style>
            <button aria-label="Recents"><svg width="42" height="42" viewBox="0 0 42 42"><path d="M4 3v36M21 3v36M38 3v36"/></svg></button>
            <button aria-label="Home"><svg width="42" height="42" viewBox="0 0 42 42"><rect x="2" y="2" width="38" height="38" rx="12"/></svg></button>
            <button aria-label="Back"><svg width="42" height="42" viewBox="0 0 42 42"><path d="M31 2L11 21l20 19"/></svg></button>`;
    }
}

customElements.define("status-bar", StatusBar);
customElements.define("page-title", PageTitle);
customElements.define("site-header", SiteHeader);
customElements.define("member-nav", MemberNav);
customElements.define("member-heading", MemberHeading);
customElements.define("post-card", PostCard);
customElements.define("post-step", PostStep);
customElements.define("section-title", SectionTitle);
customElements.define("select-field", SelectField);
customElements.define("text-field", TextField);
customElements.define("condition-field", ConditionField);
customElements.define("detail-editor", DetailEditor);
customElements.define("size-note", SizeNote);
customElements.define("system-nav", SystemNav);
</script>
</body>
</html>
